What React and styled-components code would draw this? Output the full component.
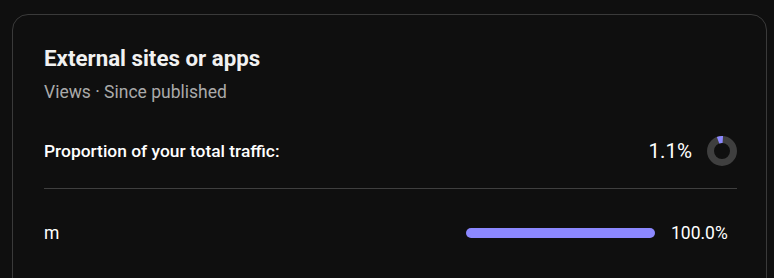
import React from "react";
import styled, { createGlobalStyle } from "styled-components";

const GlobalStyle = createGlobalStyle`
  html, body {
    margin: 0;
    padding: 0;
    background: #0f0f0f;
    font-family: Roboto, "Liberation Sans", sans-serif;
    color: #fff;
  }
`;

const Page = styled.div`
  padding: 14px 7px 0 12px;
  height: 278px;
  box-sizing: border-box;
  overflow: hidden;
`;

const Card = styled.section`
  border: 1px solid #3a3a3a;
  border-radius: 16px;
  padding: 27px 29px 40px 31px;
  min-height: 320px;
  box-sizing: border-box;
`;

const Title = styled.h2`
  margin: 0;
  font-size: 22.3px;
  line-height: 32px;
  font-weight: 700;
  color: #f1f1f1;
`;

const Subtitle = styled.div`
  margin-top: 6px;
  font-size: 17.5px;
  line-height: 24px;
  color: #aaaaaa;
`;

const SummaryRow = styled.div`
  display: flex;
  align-items: center;
  justify-content: space-between;
  margin-top: 32px;
  padding-bottom: 22px;
  border-bottom: 1px solid #3f3f3f;
`;

const Label = styled.div`
  font-size: 17.4px;
  line-height: 24px;
  font-weight: 500;
  color: #fff;
`;

const Right = styled.div`
  display: flex;
  align-items: center;
  gap: 15px;
`;

const Value = styled.span`
  font-size: 20.5px;
  line-height: 24px;
  color: #fff;
`;

const ItemRow = styled.div`
  display: flex;
  align-items: center;
  padding: 32px 0;
`;

const ItemName = styled.div`
  flex: 1;
  font-size: 17.5px;
  line-height: 24px;
  color: #fff;
`;

const BarTrack = styled.div`
  width: 189px;
  height: 10px;
  margin-right: 16px;
`;

const BarFill = styled.div`
  height: 100%;
  border-radius: 5px;
  background: #8c88ff;
`;

const Percent = styled.span`
  width: 66px;
  font-size: 17.5px;
  line-height: 24px;
  color: #fff;
`;

const Donut = () => {
  const r = 11.5;
  const c = 15;
  const a0 = (-20 * Math.PI) / 180;
  const a1 = (4 * Math.PI) / 180;
  const p = (a) => [c + r * Math.sin(a), c - r * Math.cos(a)];
  const [x0, y0] = p(a0);
  const [x1, y1] = p(a1);
  return (
    <svg width="30" height="30" viewBox="0 0 30 30">
      <circle cx={c} cy={c} r={r} fill="none" stroke="#3f3f3f" strokeWidth="7" />
      <path
        d={`M${x0} ${y0} A${r} ${r} 0 0 1 ${x1} ${y1}`}
        fill="none"
        stroke="#8c88ff"
        strokeWidth="7"
      />
    </svg>
  );
};

export default function App() {
  const items = [{ name: "m", share: 100 }];
  return (
    <>
      <GlobalStyle />
      <Page>
        <Card>
          <Title>External sites or apps</Title>
          <Subtitle>Views · Since published</Subtitle>
          <SummaryRow>
            <Label>Proportion of your total traffic:</Label>
            <Right>
              <Value>1.1%</Value>
              <Donut />
            </Right>
          </SummaryRow>
          {items.map((it) => (
            <ItemRow key={it.name}>
              <ItemName>{it.name}</ItemName>
              <BarTrack>
                <BarFill style={{ width: `${it.share}%` }} />
              </BarTrack>
              <Percent>{it.share.toFixed(1)}%</Percent>
            </ItemRow>
          ))}
        </Card>
      </Page>
    </>
  );
}
